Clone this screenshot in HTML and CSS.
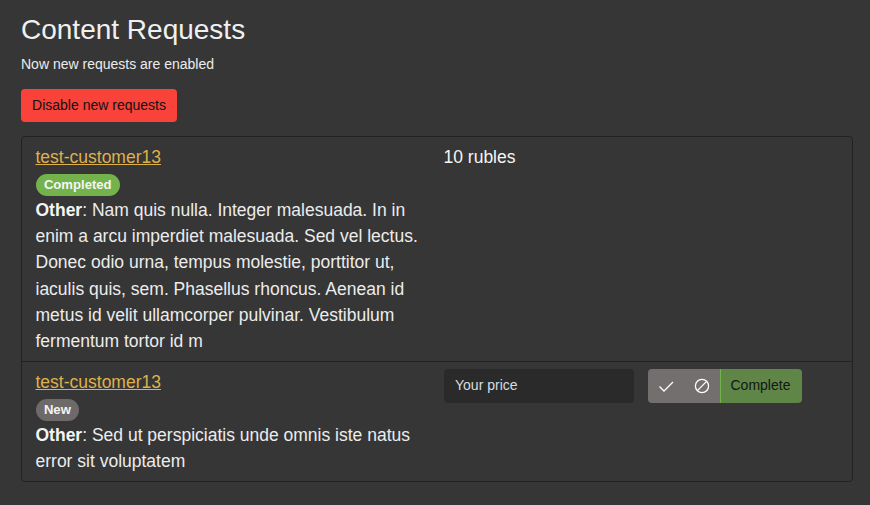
FILE: index.html
```html
<!DOCTYPE html>
<html lang="en">
<head>
<meta charset="utf-8">
<title>Content Requests</title>
<link rel="stylesheet" href="styles.css">
</head>
<body>
<main class="page">
  <h1 class="title">Content Requests</h1>
  <p class="status">Now new requests are enabled</p>
  <button class="toggle" type="button">Disable new requests</button>
  <div class="list">
    <div class="row">
      <div class="info">
        <a class="customer" href="#">test-customer13</a>
        <div class="tag-line"><span class="tag tag-done">Completed</span></div>
        <div class="desc"><strong>Other</strong>: Nam quis nulla. Integer malesuada. In in enim a arcu imperdiet malesuada. Sed vel lectus. Donec odio urna, tempus molestie, porttitor ut, iaculis quis, sem. Phasellus rhoncus. Aenean id metus id velit ullamcorper pulvinar. Vestibulum fermentum tortor id m</div>
      </div>
      <div class="price">10 rubles</div>
    </div>
    <div class="row">
      <div class="info">
        <a class="customer" href="#">test-customer13</a>
        <div class="tag-line"><span class="tag tag-new">New</span></div>
        <div class="desc"><strong>Other</strong>: Sed ut perspiciatis unde omnis iste natus error sit voluptatem</div>
      </div>
      <div class="actions">
        <input class="price-input" type="text" placeholder="Your price">
        <div class="btn-group">
          <button class="icon-btn" type="button" aria-label="Accept">
            <svg width="16" height="16" viewBox="0 0 16 16" fill="none" stroke="#fff" stroke-width="1.3"><path d="M1.5 8.5 L6 13 L15 4"/></svg>
          </button>
          <button class="icon-btn" type="button" aria-label="Reject">
            <svg width="16" height="16" viewBox="0 0 16 16" fill="none" stroke="#fff" stroke-width="1.3"><circle cx="8" cy="8" r="6.6"/><path d="M3.4 12.6 L12.6 3.4"/></svg>
          </button>
          <button class="complete" type="button">Complete</button>
        </div>
      </div>
    </div>
  </div>
</main>
</body>
</html>
```
FILE: styles.css
```css
* { box-sizing: border-box; }
html, body { margin: 0; height: 100%; }
body {
  background: #363636;
  color: #f5f5f5;
  font-family: "Liberation Sans", Arial, sans-serif;
  overflow: hidden;
}
.page { padding: 12px 17px 0 21px; }
.title {
  margin: 0;
  font-size: 28px;
  font-weight: 400;
  line-height: 36px;
  color: #f0f0f0;
}
.status {
  margin: 6px 0 0;
  font-size: 14px;
  line-height: 21px;
  color: #ececec;
}
.toggle {
  display: block;
  margin: 14px 0 0;
  height: 33px;
  width: 156px;
  padding: 0 0 2px;
  border: 0;
  border-radius: 4px;
  background: #f9423a;
  color: #111;
  font: 14px "Liberation Sans", Arial, sans-serif;
}
.list {
  margin-top: 14px;
  border: 1px solid #222;
  border-radius: 4px;
}
.row {
  display: grid;
  grid-template-columns: 408px 1fr;
  padding: 7px 14px 6.4px 13.5px;
}
.row:last-child { padding-bottom: 7px; }
.row + .row { border-top: 1px solid #222; }
.info, .price, .desc { font-size: 17.5px; line-height: 26.25px; }
.customer { color: #dfb14b; text-decoration: underline; }
.tag-line { height: 26.6px; padding-top: 4px; display: flex; align-items: flex-start; }
.tag {
  display: inline-block;
  height: 22px;
  padding: 0 8.4px;
  border-radius: 11px;
  color: #f5f5f5;
  font-size: 13.125px;
  font-weight: 700;
  line-height: 21px;
}
.tag-done { background: #74b24b; }
.tag-new { background: #6e6a6a; }
.desc { padding-right: 12px; color: #ececec; }
.desc strong { color: #f5f5f5; }
.actions { display: flex; align-items: flex-start; gap: 14px; }
.price-input {
  width: 190px;
  height: 34px;
  padding: 0 11.5px 1px;
  border: 0;
  border-radius: 4px;
  background: #2a2a2a;
  color: #f5f5f5;
  font: 14px "Liberation Sans", Arial, sans-serif;
}
.price-input::placeholder { color: #d6dde0; opacity: 1; }
.btn-group { display: flex; height: 34px; }
.icon-btn {
  display: flex;
  align-items: center;
  justify-content: center;
  width: 36px;
  padding: 0;
  border: 0;
  background: #746f6f;
}
.icon-btn:first-child { border-radius: 4px 0 0 4px; }
.complete {
  padding: 0 12px 2px 10px;
  border: 0;
  border-left: 1px solid #74b24b;
  border-radius: 0 4px 4px 0;
  background: #5f8647;
  color: #151515;
  font: 14px "Liberation Sans", Arial, sans-serif;
}
```
